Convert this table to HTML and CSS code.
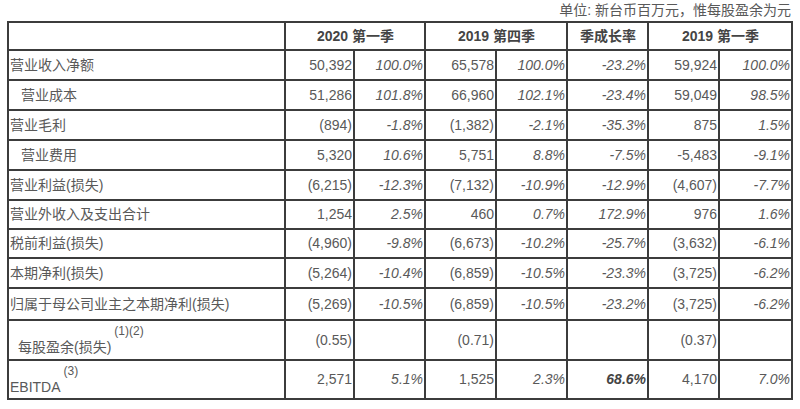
FILE: index.html
```html
<!DOCTYPE html>
<html lang="zh">
<head>
<meta charset="utf-8">
<title>财务摘要</title>
<link rel="stylesheet" href="styles.css">
</head>
<body>
<div class="page">
  <div class="unit">单位: 新台币百万元，惟每股盈余为元</div>
  <table class="fin">
    <colgroup>
      <col class="c-label"><col class="c-a"><col class="c-b"><col class="c-c"><col class="c-d"><col class="c-e"><col class="c-f"><col class="c-g">
    </colgroup>
    <thead>
      <tr class="head">
        <th></th>
        <th colspan="2">2020 第一季</th>
        <th colspan="2">2019 第四季</th>
        <th>季成长率</th>
        <th colspan="2">2019 第一季</th>
      </tr>
    </thead>
    <tbody>
      <tr><td class="label">营业收入净额</td><td>50,392</td><td class="pct">100.0%</td><td>65,578</td><td class="pct">100.0%</td><td class="pct">-23.2%</td><td>59,924</td><td class="pct">100.0%</td></tr>
      <tr><td class="label indent">营业成本</td><td>51,286</td><td class="pct">101.8%</td><td>66,960</td><td class="pct">102.1%</td><td class="pct">-23.4%</td><td>59,049</td><td class="pct">98.5%</td></tr>
      <tr><td class="label">营业毛利</td><td>(894)</td><td class="pct">-1.8%</td><td>(1,382)</td><td class="pct">-2.1%</td><td class="pct">-35.3%</td><td>875</td><td class="pct">1.5%</td></tr>
      <tr><td class="label indent">营业费用</td><td>5,320</td><td class="pct">10.6%</td><td>5,751</td><td class="pct">8.8%</td><td class="pct">-7.5%</td><td>-5,483</td><td class="pct">-9.1%</td></tr>
      <tr><td class="label">营业利益(损失)</td><td>(6,215)</td><td class="pct">-12.3%</td><td>(7,132)</td><td class="pct">-10.9%</td><td class="pct">-12.9%</td><td>(4,607)</td><td class="pct">-7.7%</td></tr>
      <tr class="r29"><td class="label">营业外收入及支出合计</td><td>1,254</td><td class="pct">2.5%</td><td>460</td><td class="pct">0.7%</td><td class="pct">172.9%</td><td>976</td><td class="pct">1.6%</td></tr>
      <tr class="r29"><td class="label">税前利益(损失)</td><td>(4,960)</td><td class="pct">-9.8%</td><td>(6,673)</td><td class="pct">-10.2%</td><td class="pct">-25.7%</td><td>(3,632)</td><td class="pct">-6.1%</td></tr>
      <tr><td class="label">本期净利(损失)</td><td>(5,264)</td><td class="pct">-10.4%</td><td>(6,859)</td><td class="pct">-10.5%</td><td class="pct">-23.3%</td><td>(3,725)</td><td class="pct">-6.2%</td></tr>
      <tr class="r31"><td class="label">归属于母公司业主之本期净利(损失)</td><td>(5,269)</td><td class="pct">-10.5%</td><td>(6,859)</td><td class="pct">-10.5%</td><td class="pct">-23.2%</td><td>(3,725)</td><td class="pct">-6.2%</td></tr>
      <tr class="tall"><td class="label eps">每股盈余(损失)<span class="note">(1)(2)</span></td><td>(0.55)</td><td></td><td>(0.71)</td><td></td><td></td><td>(0.37)</td><td></td></tr>
      <tr class="tall"><td class="label ebitda">EBITDA<span class="note">(3)</span></td><td>2,571</td><td class="pct">5.1%</td><td>1,525</td><td class="pct">2.3%</td><td class="pct strong">68.6%</td><td>4,170</td><td class="pct">7.0%</td></tr>
    </tbody>
  </table>
</div>
</body>
</html>
```

FILE: styles.css
```css
html, body {
  margin: 0;
  padding: 0;
  background: #ffffff;
}

.page {
  width: 800px;
  padding: 2px 0 0 7px;
  box-sizing: border-box;
  font-family: "Liberation Sans", Arial, "Noto Sans CJK SC", sans-serif;
  color: #595959;
}

.unit {
  width: 784px;
  text-align: right;
  font-size: 14px;
  line-height: 17px;
  height: 19px;
  color: #595959;
}

.fin {
  width: 784px;
  border-collapse: collapse;
  table-layout: fixed;
  font-size: 14px;
}

.c-label { width: 277px; }
.c-a { width: 69px; }
.c-b { width: 71px; }
.c-c { width: 71px; }
.c-d { width: 71px; }
.c-e { width: 81px; }
.c-f { width: 71px; }
.c-g { width: 73px; }

.fin th,
.fin td {
  border: 2px solid #3c3c3c;
  padding: 0 1px 0 2px;
  height: 28px;
  vertical-align: middle;
  text-align: right;
  white-space: nowrap;
  line-height: 17px;
}

.fin th {
  text-align: center;
  font-weight: bold;
  color: #444444;
  height: 26px;
}

.fin td.label {
  text-align: left;
  padding-left: 1px;
}

.fin td.indent {
  padding-left: 12px;
}

.fin td.pct {
  font-style: italic;
}

.fin td.strong {
  font-weight: bold;
  color: #444444;
}

.r29 td { height: 27px; }
.r31 td { height: 30px; }
.tall td { height: 35px; }

.fin td.eps {
  padding-left: 9px;
  vertical-align: bottom;
  padding-bottom: 3px;
}

.fin td.ebitda {
  vertical-align: bottom;
  padding-bottom: 2px;
}

.note {
  font-size: 12px;
  vertical-align: 17px;
  line-height: 12px;
  margin-left: 3px;
}
```
